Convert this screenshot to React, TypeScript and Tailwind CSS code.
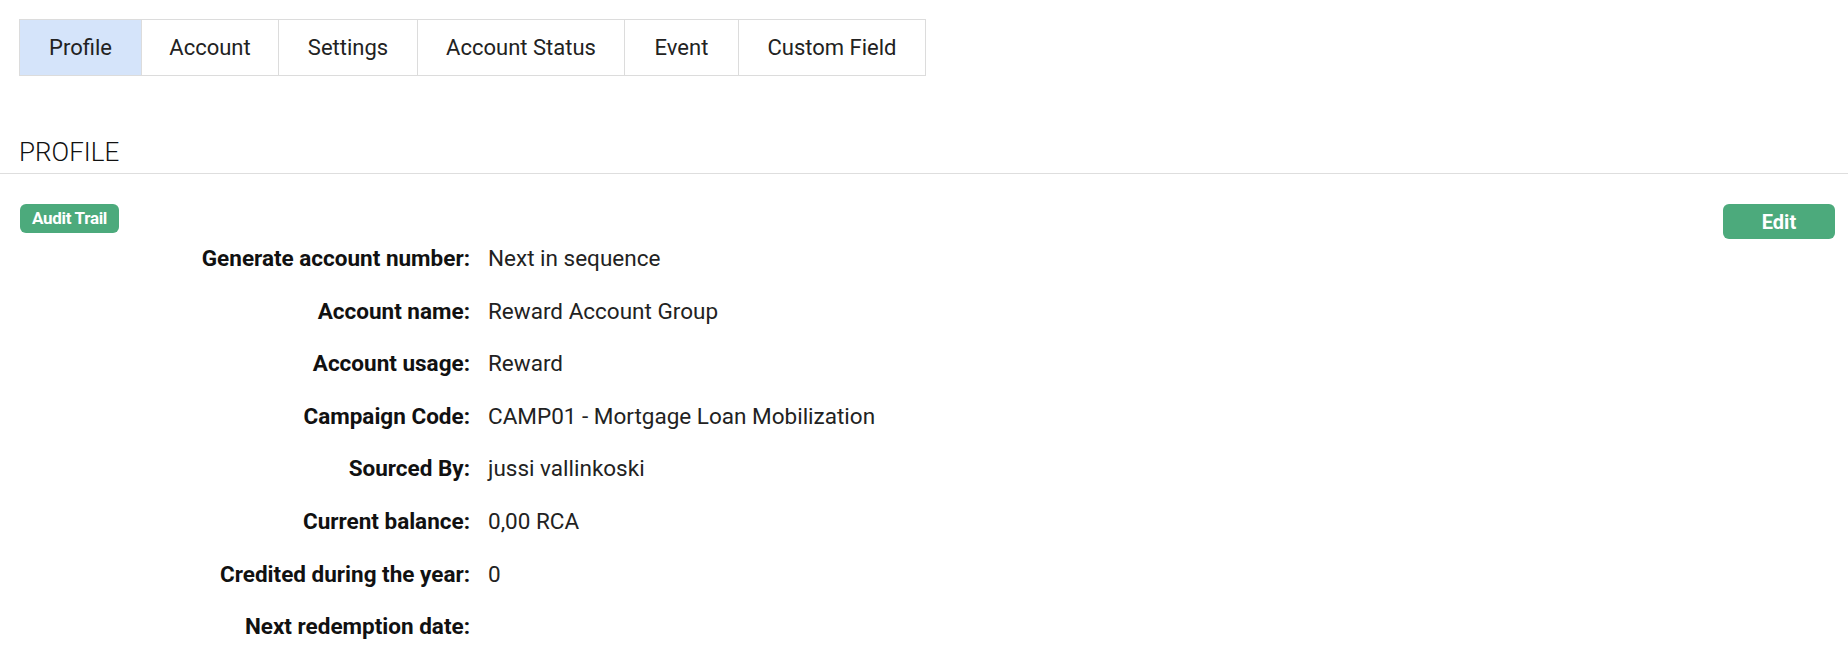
import React from "react";

const tabs = [
  { label: "Profile", w: "w-[121px]", active: true },
  { label: "Account", w: "w-[137px]" },
  { label: "Settings", w: "w-[139px]" },
  { label: "Account Status", w: "w-[207px]" },
  { label: "Event", w: "w-[114px]" },
  { label: "Custom Field", w: "w-[187px]" },
];

const rows: [string, string][] = [
  ["Generate account number:", "Next in sequence"],
  ["Account name:", "Reward Account Group"],
  ["Account usage:", "Reward"],
  ["Campaign Code:", "CAMP01 - Mortgage Loan Mobilization"],
  ["Sourced By:", "jussi vallinkoski"],
  ["Current balance:", "0,00 RCA"],
  ["Credited during the year:", "0"],
  ["Next redemption date:", ""],
];

export default function App() {
  return (
    <div className="min-h-[648px] w-full bg-white text-[#222] font-['Roboto',sans-serif]">
      {/* tab bar */}
      <div className="pl-[19px] pt-[19px]">
        <div className="inline-flex border border-[#dcdcdc]">
          {tabs.map((t, i) => (
            <div
              key={t.label}
              className={`${t.w} h-[55px] flex items-center justify-center text-[22px] ${
                i > 0 ? "border-l border-[#dcdcdc]" : ""
              } ${t.active ? "bg-[#d5e4fa]" : "bg-white"}`}
            >
              {t.label}
            </div>
          ))}
        </div>
      </div>

      {/* section header */}
      <div className="mt-[58px] border-b border-[#dedede] pl-[19px] pb-[3px]">
        <h2 className="text-[26px] font-light leading-[36px] text-[#111]">PROFILE</h2>
      </div>

      <div className="pt-[30px]">
        <div className="flex h-[28px] items-start justify-between pl-[20px] pr-[13px]">
          <span className="flex h-[29px] w-[99px] items-center justify-center rounded-[6px] bg-[#4caa7c] text-[17px] font-bold tracking-[-0.3px] text-white">
            Audit Trail
          </span>
          <button
            type="button"
            className="flex h-[35px] w-[112px] items-center justify-center rounded-[6px] bg-[#4caa7c] text-[20px] font-bold text-white"
          >
            Edit
          </button>
        </div>

        <div className="flex flex-col">
          {rows.map(([label, value]) => (
            <div key={label} className="flex h-[52.6px] items-center leading-[52.6px]">
              <div className="w-[470px] shrink-0 text-right text-[22.5px] font-bold text-[#111]">
                {label}
              </div>
              <div className="pl-[18px] text-[22.5px] text-[#222]">{value}</div>
            </div>
          ))}
        </div>
      </div>
    </div>
  );
}
